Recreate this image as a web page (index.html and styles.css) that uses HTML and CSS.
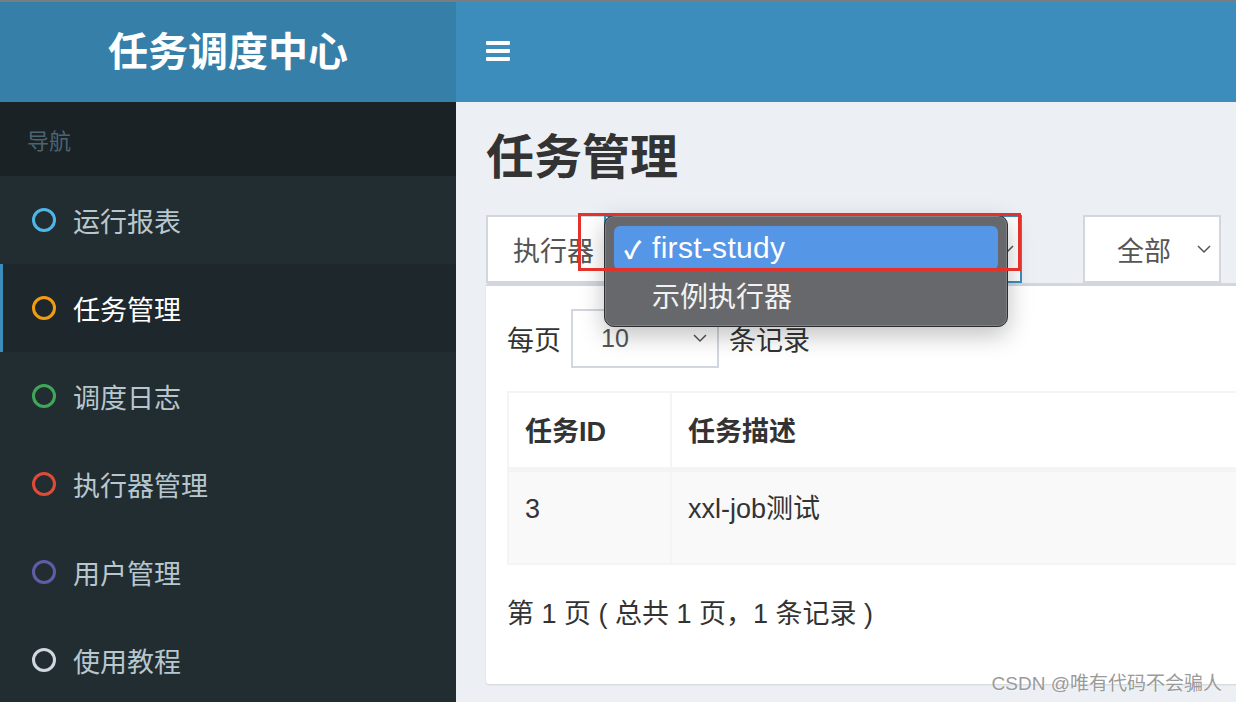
FILE: index.html
```html
<!DOCTYPE html>
<html lang="zh-CN">
<head>
<meta charset="utf-8">
<title>任务调度中心</title>
<link rel="stylesheet" href="styles.css">
</head>
<body>
<div class="topline"></div>
<div class="app">
  <aside class="sidebar">
    <div class="logo">任务调度中心</div>
    <div class="nav-header">导航</div>
    <ul class="menu">
      <li class="item"><span class="dot dot-aqua"></span><span>运行报表</span></li>
      <li class="item active"><span class="dot dot-yellow"></span><span>任务管理</span></li>
      <li class="item"><span class="dot dot-green"></span><span>调度日志</span></li>
      <li class="item"><span class="dot dot-red"></span><span>执行器管理</span></li>
      <li class="item"><span class="dot dot-purple"></span><span>用户管理</span></li>
      <li class="item"><span class="dot dot-gray"></span><span>使用教程</span></li>
    </ul>
  </aside>
  <main class="main">
    <header class="navbar">
      <span class="burger"><i></i><i></i><i></i></span>
    </header>
    <section class="content">
      <h1 class="title">任务管理</h1>
      <div class="filters">
        <div class="input-group">
          <span class="addon">执行器</span>
          <span class="select focus">
            <span class="sel-text covered">first-study</span>
            <svg class="chev" width="14" height="9" viewBox="0 0 14 9"><polyline points="1,1 7,7 13,1" fill="none" stroke="#555" stroke-width="1.5"/></svg>
          </span>
        </div>
        <span class="select small">
          <span class="sel-text">全部</span>
          <svg class="chev" width="14" height="9" viewBox="0 0 14 9"><polyline points="1,1 7,7 13,1" fill="none" stroke="#555" stroke-width="1.5"/></svg>
        </span>
      </div>
      <div class="box">
        <div class="length">
          <span>每页</span>
          <span class="select len">
            <span class="sel-text">10</span>
            <svg class="chev" width="14" height="9" viewBox="0 0 14 9"><polyline points="1,1 7,7 13,1" fill="none" stroke="#555" stroke-width="1.5"/></svg>
          </span>
          <span>条记录</span>
        </div>
        <table class="table">
          <thead>
            <tr><th class="c1">任务ID</th><th>任务描述</th></tr>
          </thead>
          <tbody>
            <tr><td class="c1">3</td><td>xxl-job测试</td></tr>
          </tbody>
        </table>
        <div class="info">第 1 页 ( 总共 1 页，1 条记录 )</div>
      </div>
    </section>
  </main>
</div>

<div class="popup">
  <div class="opt selected"><span class="check">✓</span><span class="latin">first-study</span></div>
  <div class="opt"><span class="check"></span><span>示例执行器</span></div>
</div>
<div class="redbox"></div>
<div class="watermark">CSDN @唯有代码不会骗人</div>
</body>
</html>
```

FILE: styles.css
```css
* { box-sizing: border-box; }
html, body { margin: 0; padding: 0; }
body {
  width: 1236px;
  height: 702px;
  overflow: hidden;
  position: relative;
  font-family: "Liberation Sans", "Noto Sans CJK SC", sans-serif;
  color: #333;
  background: #ecf0f5;
}
.topline { height: 2px; background: #787d82; }
.app {
  display: grid;
  grid-template-columns: 456px 780px;
  height: 700px;
}
.sidebar { background: #222d32; display: flex; flex-direction: column; }
.logo {
  height: 100px;
  background: #367fa9;
  color: #fff;
  font-size: 40px;
  font-weight: 700;
  display: flex;
  align-items: center;
  justify-content: center;
  padding-bottom: 6px;
}
.nav-header {
  height: 74px;
  background: #1a2226;
  color: #4b646f;
  font-size: 22px;
  display: flex;
  align-items: center;
  padding-left: 27px;
}
.menu { list-style: none; margin: 0; padding: 0; }
.item {
  height: 88px;
  display: flex;
  align-items: center;
  gap: 17px;
  padding-left: 29px;
  color: #b8c7ce;
  font-size: 27px;
  border-left: 3px solid transparent;
}
.item.active {
  background: #1e282c;
  border-left-color: #3c8dbc;
  color: #fff;
}
.dot {
  width: 24px;
  height: 24px;
  border-radius: 50%;
  border: 3px solid #fff;
  flex: none;
}
.dot-aqua { border-color: #4fb6e6; }
.dot-yellow { border-color: #f39c12; }
.dot-green { border-color: #3fa757; }
.dot-red { border-color: #dd4b39; }
.dot-purple { border-color: #605ca8; }
.dot-gray { border-color: #d2d6de; }

.main { overflow: hidden; display: flex; flex-direction: column; }
.navbar {
  height: 100px;
  background: #3c8dbc;
  display: flex;
  align-items: center;
  padding-left: 30px;
}
.burger { display: flex; flex-direction: column; gap: 4px; width: 24px; margin-top: -2px; }
.burger i { display: block; height: 4px; background: #fff; border-radius: 1px; }

.content { padding: 24px 0 0 30px; }
.title {
  margin: 0 0 25px;
  font-size: 48px;
  line-height: 64px;
  font-weight: 700;
  color: #333;
}
.filters { display: flex; gap: 61px; height: 68px; }
.input-group { display: flex; width: 536px; }
.addon {
  width: 118px;
  flex: none;
  background: #fff;
  border: 2px solid #d2d6de;
  border-right: none;
  display: flex;
  align-items: center;
  padding-left: 25px;
  font-size: 27px;
  color: #555;
}
.select {
  background: #fff;
  border: 2px solid #d2d6de;
  display: flex;
  align-items: center;
  justify-content: space-between;
  font-size: 27px;
  color: #555;
}
.covered { visibility: hidden; }
.select.focus { flex: 1; border-color: #3c8dbc; padding: 0 6px 0 20px; }
.select.small { width: 138px; padding: 0 8px 0 32px; }
.select.len { width: 148px; height: 59px; padding: 0 10px 0 28px; font-size: 25px; }

.box {
  width: 800px;
  height: 401px;
  background: #fff;
  border-top: 3px solid #d2d6de;
  border-radius: 3px;
  box-shadow: 0 1px 2px rgba(0,0,0,0.12);
  padding: 23px 0 0 21px;
}
.length { display: flex; align-items: center; gap: 10px; font-size: 27px; color: #333; }
.table {
  margin-top: 23px;
  width: 780px;
  border-collapse: collapse;
  border: 2px solid #f4f4f4;
  font-size: 27px;
}
.table th {
  text-align: left;
  font-weight: 700;
  height: 77px;
  padding: 0 16px;
  border-bottom: 5px solid #f4f4f4;
  border-right: 2px solid #f4f4f4;
}
.table td {
  height: 95px;
  vertical-align: top;
  padding: 20px 16px;
  line-height: 34px;
  background: #f9f9f9;
  border-right: 2px solid #f4f4f4;
}
.table .c1 { width: 163px; }
.info { margin-top: 32px; font-size: 27px; line-height: 34px; }

.popup {
  position: absolute;
  left: 604px;
  top: 215px;
  width: 404px;
  height: 112px;
  background: #67686b;
  border: 1px solid #2d2e30;
  border-radius: 10px;
  box-shadow: inset 0 0 0 1px #808184, 0 8px 24px rgba(0,0,0,0.25);
  padding: 10px 9px;
  font-size: 28px;
  color: #f2f2f2;
}
.opt {
  height: 44px;
  display: flex;
  align-items: center;
  padding-left: 10px;
}
.opt.selected {
  background: #5596e6;
  border-radius: 6px;
  color: #fff;
  margin-bottom: 3px;
}
.latin { font-size: 30px; letter-spacing: 0.3px; }
.check { width: 28px; flex: none; font-size: 24px; font-weight: 700; }
.redbox {
  position: absolute;
  left: 578px;
  top: 213px;
  width: 443px;
  height: 58px;
  border: 3px solid #e2322b;
}
.watermark {
  position: absolute;
  right: 14px;
  bottom: 7px;
  font-size: 19px;
  color: #9a9a9a;
  text-shadow: 0 0 2px #fff;
}
```
